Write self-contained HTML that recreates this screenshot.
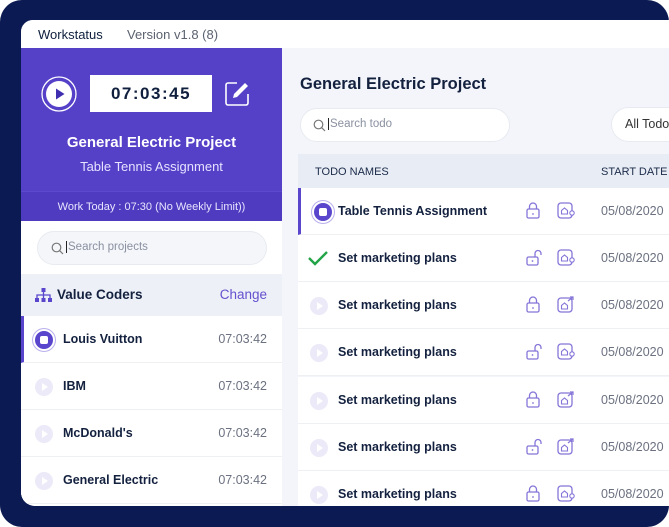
<!DOCTYPE html>
<html><head><meta charset="utf-8"><style>
*{box-sizing:border-box;margin:0;padding:0}
html,body{width:669px;height:527px;overflow:hidden;background:#fff;font-family:"Liberation Sans",sans-serif}
.bg{position:absolute;left:0;top:0;width:669px;height:527px;background:#0b1a52;border-radius:22px}
.card{position:absolute;left:21px;top:20px;width:660px;height:486px;background:#f3f5fb;border-radius:12px 0 0 14px;overflow:hidden}
.top{position:absolute;left:0;top:0;width:660px;height:28px;background:#fff;font-size:13px}
.top .a{position:absolute;left:17px;top:7px;color:#0f1f3d}
.top .b{position:absolute;left:106px;top:7px;color:#5b6270}
.left{position:absolute;left:0;top:28px;width:261px;height:458px;background:#fff}
.purple{position:absolute;left:0;top:0;width:261px;height:173px;background:#5540c8}
.wt{position:absolute;left:0;top:143px;width:261px;height:30px;background:#4f3bbf;border-top:1px solid #5c49cc;color:#e8e5ff;font-size:11px;text-align:center;line-height:30px}
.timer{position:absolute;left:69px;top:27px;width:122px;height:37px;background:#fff;color:#0f1f3d;font-size:17px;font-weight:bold;letter-spacing:1.5px;text-align:center;line-height:37px}
.pt{position:absolute;left:0;width:261px;text-align:center;color:#fff}
.search{position:absolute;border-radius:18px;background:#f4f6fa;border:1px solid #e7eaf0;color:#8a90a0;font-size:11.5px}
.vc{position:absolute;left:0;top:226px;width:261px;height:42px;background:#edf0f7}
.row{position:absolute;left:0;width:261px;height:47px;border-bottom:1px solid #eef0f4;background:#fff}
.row .n{position:absolute;left:42px;top:16px;font-size:12.5px;font-weight:bold;color:#13213f}
.row .t{position:absolute;right:15px;top:16px;font-size:12.5px;color:#6b7180}
.pl{position:absolute;width:18px;height:18px;border-radius:50%;background:#eceaf8}
.pl:after{content:"";position:absolute;left:7px;top:5px;border-left:6px solid #fff;border-top:4px solid transparent;border-bottom:4px solid transparent}
.stop{position:absolute;width:18px;height:18px;border-radius:50%;background:#5a46cc;box-shadow:0 0 0 2px #fff,0 0 0 3px #b9b0ee}
.stop:after{content:"";position:absolute;left:5px;top:5px;width:8px;height:8px;background:#fff;border-radius:2px}
.th{position:absolute;left:277px;top:134px;width:400px;height:34px;background:#e8ecf5;font-size:11px;color:#1a2a48}
.tr{position:absolute;left:277px;width:400px;height:47px;background:#fff;border-bottom:1px solid #eef0f4}
.tr .n{position:absolute;left:40px;top:16px;font-size:12.5px;font-weight:bold;color:#13213f}
.tr .d{position:absolute;left:303px;top:16px;font-size:12.5px;color:#6b7180}
.ic{position:absolute;top:14px}
.chk{position:absolute;left:10px;top:15px}
</style></head><body>
<svg width="0" height="0" style="position:absolute"><defs>
<g id="lk"><rect x="1" y="7" width="12" height="9" rx="1.5" fill="none" stroke="#8575d8" stroke-width="1.3"/><path d="M3.5 7V4.5a3.5 3.5 0 0 1 7 0V7" fill="none" stroke="#8575d8" stroke-width="1.3"/><circle cx="7" cy="12" r="0.9" fill="#8575d8"/></g>
<g id="ul"><rect x="1" y="8" width="11" height="8" rx="1.5" fill="none" stroke="#8575d8" stroke-width="1.3"/><path d="M9 8V4.5a3 3 0 0 1 6 0V6" fill="none" stroke="#8575d8" stroke-width="1.3"/><circle cx="6.5" cy="12" r="0.9" fill="#8575d8"/></g>
<g id="ip"><rect x="1" y="1" width="14" height="15" rx="3" fill="none" stroke="#8575d8" stroke-width="1.3"/><path d="M4.5 12V8.5l3-2.5 3 2.5V12z" fill="none" stroke="#8575d8" stroke-width="1.1"/><circle cx="15" cy="11" r="2.2" fill="#fff" stroke="#8575d8" stroke-width="1.1"/></g>
<g id="ia"><rect x="1" y="2" width="14" height="14" rx="3" fill="none" stroke="#8575d8" stroke-width="1.3"/><path d="M4.5 13V9.5l3-2.5 3 2.5V13z" fill="none" stroke="#8575d8" stroke-width="1.1"/><path d="M11 5l5-4M13 1h3v3" fill="none" stroke="#8575d8" stroke-width="1.2"/></g>
</defs></svg>
<div class="bg"></div>
<div class="card">
 <div class="top"><span class="a">Workstatus</span><span class="b">Version v1.8 (8)</span></div>
 <div class="left">
  <div class="purple">
   <svg style="position:absolute;left:20px;top:28px" width="36" height="36" viewBox="0 0 36 36"><circle cx="18" cy="18" r="17" fill="none" stroke="#fff" stroke-width="1.3"/><circle cx="18" cy="18" r="13" fill="#fff"/><path d="M15 12.5v11l8.5-5.5z" fill="#3f2fb0"/></svg>
   <div class="timer">07:03:45</div>
   <svg style="position:absolute;left:203px;top:32px" width="27" height="27" viewBox="0 0 27 27"><path d="M13 3H4a2 2 0 0 0-2 2v18a2 2 0 0 0 2 2h18a2 2 0 0 0 2-2v-9" fill="none" stroke="#fff" stroke-width="1.6"/><path d="M9 18l1-4L21 3l3 3L13 17z" fill="#fff"/></svg>
   <div class="pt" style="top:86px;font-size:15px;font-weight:bold">General Electric Project</div>
   <div class="pt" style="top:111px;font-size:13px;color:#e6e2ff">Table Tennis Assignment</div>
   <div class="wt">Work Today : 07:30 (No Weekly Limit))</div>
  </div>
  <div class="search" style="left:16px;top:183px;width:230px;height:34px"><svg style="position:absolute;left:13px;top:10px" width="13" height="13" viewBox="0 0 13 13"><circle cx="5.5" cy="5.5" r="4.3" fill="none" stroke="#777" stroke-width="1.2"/><path d="M8.7 8.7L12 12" stroke="#777" stroke-width="1.2"/></svg><span style="position:absolute;left:28px;top:9px;border-left:1px solid #222;padding-left:1px">Search projects</span></div>
  <div class="vc">
   <svg style="position:absolute;left:14px;top:14px" width="17" height="14" viewBox="0 0 17 14"><rect x="6.5" y="0" width="4" height="4" fill="#5a46cc"/><path d="M8.5 4v3M2 10V7h13v3M8.5 7v3" stroke="#5a46cc" stroke-width="1.3" fill="none"/><rect x="0" y="10" width="4" height="4" fill="#5a46cc"/><rect x="6.5" y="10" width="4" height="4" fill="#5a46cc"/><rect x="13" y="10" width="4" height="4" fill="#5a46cc"/></svg>
   <span style="position:absolute;left:36px;top:13px;font-size:13.5px;font-weight:bold;color:#13213f">Value Coders</span>
   <span style="position:absolute;right:15px;top:13px;font-size:13.5px;color:#6450cf">Change</span>
  </div>
  <div class="row" style="top:268px;border-left:3px solid #5a46cc"><div class="stop" style="left:11px;top:15px"></div><span class="n" style="left:39px">Louis Vuitton</span><span class="t">07:03:42</span></div>
  <div class="row" style="top:315px"><div class="pl" style="left:14px;top:15px"></div><span class="n">IBM</span><span class="t">07:03:42</span></div>
  <div class="row" style="top:362px"><div class="pl" style="left:14px;top:15px"></div><span class="n">McDonald's</span><span class="t">07:03:42</span></div>
  <div class="row" style="top:409px"><div class="pl" style="left:14px;top:15px"></div><span class="n">General Electric</span><span class="t">07:03:42</span></div>
 </div>
 <div style="position:absolute;left:279px;top:55px;font-size:16.5px;font-weight:bold;color:#13213f">General Electric Project</div>
 <div class="search" style="left:279px;top:88px;width:210px;height:34px;background:#fff"><svg style="position:absolute;left:12px;top:10px" width="13" height="13" viewBox="0 0 13 13"><circle cx="5.5" cy="5.5" r="4.3" fill="none" stroke="#777" stroke-width="1.2"/><path d="M8.7 8.7L12 12" stroke="#777" stroke-width="1.2"/></svg><span style="position:absolute;left:27px;top:9px;border-left:1px solid #222;padding-left:1px">Search todo</span></div>
 <div class="search" style="left:590px;top:87px;width:100px;height:35px;background:#fff;color:#333;font-size:12.5px"><span style="position:absolute;left:13px;top:9px">All Todo</span></div>
 <div class="th"><span style="position:absolute;left:17px;top:12px">TODO NAMES</span><span style="position:absolute;left:303px;top:12px">START DATE</span></div>

 <div class="tr" style="top:168px;border-left:3px solid #5a46cc"><div class="stop" style="left:13px;top:15px"></div><span class="n" style="left:37px">Table Tennis Assignment</span><svg class="ic" style="left:225px" width="18" height="18"><use href="#lk"/></svg><svg class="ic" style="left:256px" width="19" height="18"><use href="#ip"/></svg><span class="d" style="left:300px">05/08/2020</span></div>
 <div class="tr" style="top:215px"><svg class="chk" width="20" height="16" viewBox="0 0 20 16"><path d="M1 8l6 6L19 2" fill="none" stroke="#22a447" stroke-width="2.4"/></svg><span class="n">Set marketing plans</span><svg class="ic" style="left:228px" width="18" height="18"><use href="#ul"/></svg><svg class="ic" style="left:259px" width="19" height="18"><use href="#ip"/></svg><span class="d">05/08/2020</span></div>
 <div class="tr" style="top:262px"><div class="pl" style="left:12px;top:15px"></div><span class="n">Set marketing plans</span><svg class="ic" style="left:228px" width="18" height="18"><use href="#lk"/></svg><svg class="ic" style="left:259px" width="19" height="18"><use href="#ia"/></svg><span class="d">05/08/2020</span></div>
 <div class="tr" style="top:309px"><div class="pl" style="left:12px;top:15px"></div><span class="n">Set marketing plans</span><svg class="ic" style="left:228px" width="18" height="18"><use href="#ul"/></svg><svg class="ic" style="left:259px" width="19" height="18"><use href="#ip"/></svg><span class="d">05/08/2020</span></div>
 <div class="tr" style="top:357px"><div class="pl" style="left:12px;top:15px"></div><span class="n">Set marketing plans</span><svg class="ic" style="left:228px" width="18" height="18"><use href="#lk"/></svg><svg class="ic" style="left:259px" width="19" height="18"><use href="#ia"/></svg><span class="d">05/08/2020</span></div>
 <div class="tr" style="top:404px"><div class="pl" style="left:12px;top:15px"></div><span class="n">Set marketing plans</span><svg class="ic" style="left:228px" width="18" height="18"><use href="#ul"/></svg><svg class="ic" style="left:259px" width="19" height="18"><use href="#ia"/></svg><span class="d">05/08/2020</span></div>
 <div class="tr" style="top:451px"><div class="pl" style="left:12px;top:15px"></div><span class="n">Set marketing plans</span><svg class="ic" style="left:228px" width="18" height="18"><use href="#lk"/></svg><svg class="ic" style="left:259px" width="19" height="18"><use href="#ip"/></svg><span class="d">05/08/2020</span></div>
</div>
</body></html>
